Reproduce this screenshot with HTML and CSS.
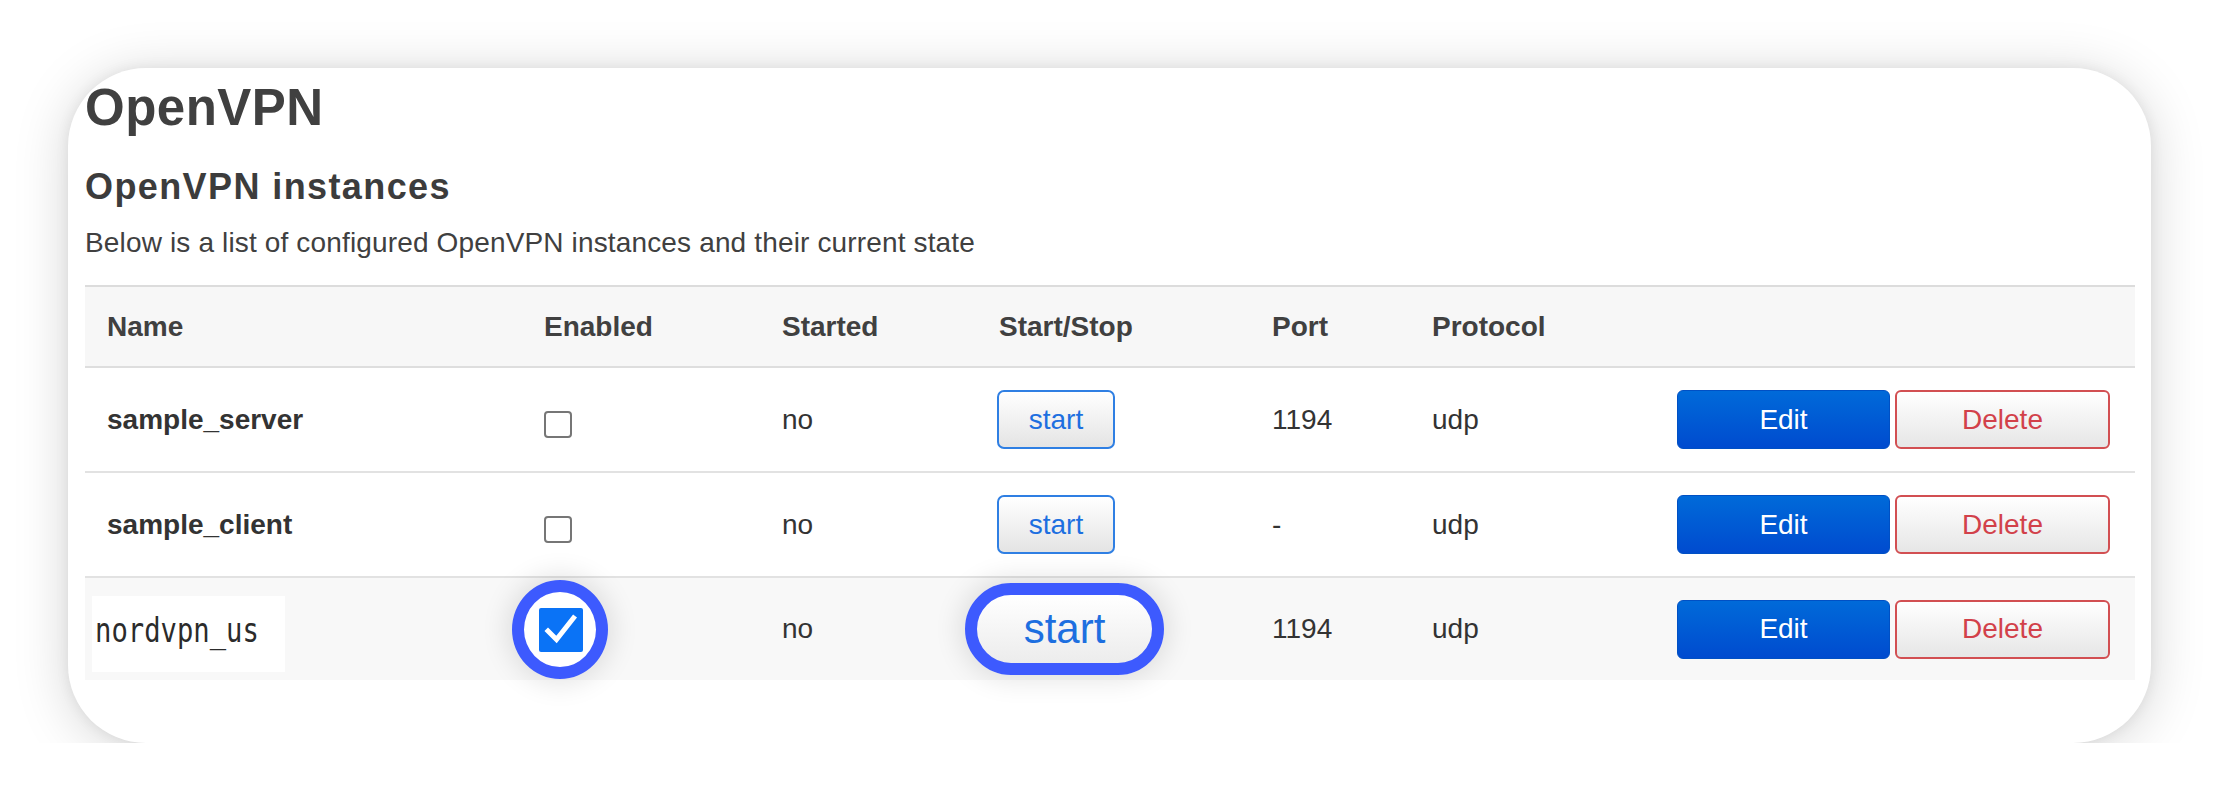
FILE: index.html
```html
<!DOCTYPE html>
<html lang="en">
<head>
<meta charset="utf-8">
<title>OpenVPN</title>
<link rel="stylesheet" href="styles.css">
</head>
<body>
<div class="card">
  <h1 class="title">OpenVPN</h1>
  <h2 class="subtitle">OpenVPN instances</h2>
  <p class="desc">Below is a list of configured OpenVPN instances and their current state</p>
  <table class="vpn-table">
    <colgroup>
      <col class="c-name"><col class="c-enabled"><col class="c-started"><col class="c-startstop"><col class="c-port"><col class="c-proto"><col class="c-actions">
    </colgroup>
    <thead>
      <tr><th>Name</th><th>Enabled</th><th>Started</th><th>Start/Stop</th><th>Port</th><th>Protocol</th><th></th></tr>
    </thead>
    <tbody>
      <tr>
        <td class="name">sample_server</td>
        <td><span class="cb"></span></td>
        <td>no</td>
        <td><button class="btn-start">start</button></td>
        <td>1194</td>
        <td>udp</td>
        <td><div class="actions"><button class="btn-edit">Edit</button><button class="btn-delete">Delete</button></div></td>
      </tr>
      <tr>
        <td class="name">sample_client</td>
        <td><span class="cb"></span></td>
        <td>no</td>
        <td><button class="btn-start">start</button></td>
        <td>-</td>
        <td>udp</td>
        <td><div class="actions"><button class="btn-edit">Edit</button><button class="btn-delete">Delete</button></div></td>
      </tr>
      <tr class="last">
        <td><span class="name-box"><span class="mono">nordvpn_us</span></span></td>
        <td>
          <span class="ring-check"><span class="cb-checked"><svg width="44" height="44" viewBox="0 0 44 44"><path d="M9 23 L17.5 31.5 L34.5 10" fill="none" stroke="#fff" stroke-width="5" stroke-linejoin="miter" stroke-linecap="square"/></svg></span></span>
        </td>
        <td>no</td>
        <td><button class="pill">start</button></td>
        <td>1194</td>
        <td>udp</td>
        <td><div class="actions"><button class="btn-edit">Edit</button><button class="btn-delete">Delete</button></div></td>
      </tr>
    </tbody>
  </table>
</div>
</body>
</html>
```
FILE: styles.css
```css
body {
  margin: 0;
  background: #ffffff;
  font-family: "Liberation Sans", Arial, sans-serif;
  color: #333333;
}

.card {
  margin: 68px 0 0 68px;
  width: 2083px;
  height: 675px;
  box-sizing: border-box;
  padding: 11px 16px 0 17px;
  background: #ffffff;
  border-radius: 78px;
  box-shadow: 0 0 14px rgba(0, 0, 0, 0.07), 0 6px 54px rgba(0, 0, 0, 0.17);
}

.title {
  margin: 0;
  font-size: 51px;
  line-height: 58px;
  letter-spacing: 0.5px;
  font-weight: 700;
  color: #404040;
}

.subtitle {
  margin: 30px 0 0;
  font-size: 36px;
  line-height: 39px;
  letter-spacing: 1.4px;
  font-weight: 700;
  color: #3c3c3c;
}

.desc {
  margin: 21px 0 0;
  font-size: 28px;
  line-height: 32px;
  letter-spacing: 0.15px;
  color: #404040;
}

.vpn-table {
  margin-top: 26px;
  width: 2050px;
  table-layout: fixed;
  border-collapse: separate;
  border-spacing: 0;
}

.c-name { width: 437px; }
.c-enabled { width: 238px; }
.c-started { width: 217px; }
.c-startstop { width: 273px; }
.c-port { width: 160px; }
.c-proto { width: 245px; }
.c-actions { width: 480px; }

.vpn-table th {
  text-align: left;
  font-size: 28px;
  line-height: 32px;
  font-weight: 700;
  color: #404040;
  background: #f7f7f7;
  height: 79px;
  padding: 0 22px;
  border-top: 2px solid #dcdcdc;
  border-bottom: 2px solid #dedede;
}

.vpn-table td {
  font-size: 28px;
  line-height: 32px;
  padding: 0 22px;
  height: 103px;
  border-bottom: 2px solid #e2e2e2;
  vertical-align: middle;
  color: #333333;
}

.vpn-table tr.last td {
  border-bottom: none;
  height: 102px;
  background: #f8f8f8;
}

.vpn-table td.name {
  font-weight: 700;
}

.cb {
  display: block;
  width: 28px;
  height: 27px;
  box-sizing: border-box;
  border: 2px solid #767676;
  border-radius: 4px;
  background: #ffffff;
  margin-top: 10px;
}

.btn-start {
  display: block;
  width: 118px;
  height: 59px;
  margin-left: -2px;
  padding: 0;
  border: 2px solid #2f7fe3;
  border-radius: 7px;
  background: linear-gradient(#ffffff, #e4e4e4);
  color: #1d6fe0;
  font-family: "Liberation Sans", Arial, sans-serif;
  font-size: 28px;
}

.actions {
  display: flex;
  gap: 5px;
}

.btn-edit {
  width: 213px;
  height: 59px;
  padding: 0;
  border: 1px solid #0050c4;
  border-radius: 6px;
  background: linear-gradient(#006ad9, #004bcf);
  color: #ffffff;
  font-family: "Liberation Sans", Arial, sans-serif;
  font-size: 28px;
}

.btn-delete {
  width: 215px;
  height: 59px;
  padding: 0;
  border: 2px solid #d24f52;
  border-radius: 6px;
  background: linear-gradient(#ffffff, #e6e6e6);
  color: #d2414a;
  font-family: "Liberation Sans", Arial, sans-serif;
  font-size: 28px;
}

.ring-check {
  display: flex;
  align-items: center;
  justify-content: center;
  width: 96px;
  height: 99px;
  box-sizing: border-box;
  margin-left: -32px;
  border: 12px solid #3d5afe;
  border-radius: 50%;
  background: #ffffff;
  box-shadow: 0 0 26px 6px rgba(0, 0, 0, 0.1);
}

.cb-checked {
  display: flex;
  width: 44px;
  height: 44px;
  margin: 2px 0 0 2px;
  background: #0a73f6;
  border-radius: 2px;
}

.pill {
  display: flex;
  align-items: center;
  justify-content: center;
  width: 199px;
  height: 92px;
  box-sizing: border-box;
  margin-left: -34px;
  padding: 0;
  border: 12px solid #3d5afe;
  border-radius: 46px;
  background: linear-gradient(#ffffff, #ececec);
  color: #1d6fe0;
  font-family: "Liberation Sans", Arial, sans-serif;
  font-size: 42px;
  box-shadow: 0 0 26px 6px rgba(0, 0, 0, 0.1);
}

.name-box {
  display: block;
  width: 193px;
  height: 76px;
  margin: 10px 0 0 -15px;
  padding-left: 3px;
  box-sizing: border-box;
  background: #ffffff;
  line-height: 68px;
  white-space: nowrap;
}

.mono {
  display: inline-block;
  font-family: "DejaVu Sans Mono", monospace;
  font-size: 34px;
  color: #2b2b2b;
  transform: scaleX(0.8);
  transform-origin: left center;
}
```
